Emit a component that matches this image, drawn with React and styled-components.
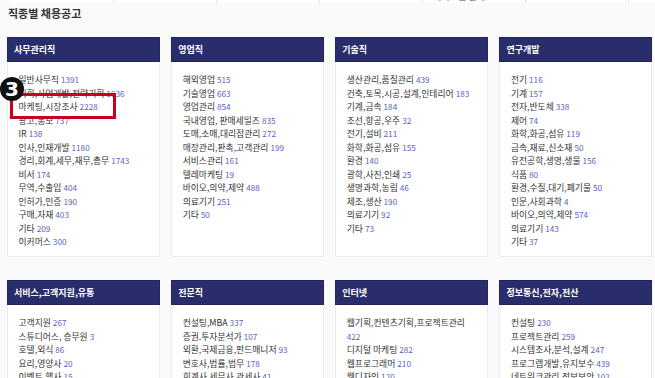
import React from 'react'
import styled, { createGlobalStyle } from 'styled-components'

const GlobalStyle = createGlobalStyle`
    html, body {
        margin: 0;
        padding: 0;
        overflow: hidden;
        background: #fafafa;
        font-family: "Noto Sans CJK KR", "Noto Sans", sans-serif;
    }
`

const Page = styled.div`
    position: relative;
    height: 378px;
    overflow: hidden;
`
const TopStrip = styled.div`
    display: flex;
    height: 3px;
    margin-left: 11px;
`
const StripCell = styled.div`
    flex: none;
    width: 103px;
    height: 3px;
    overflow: hidden;
    background: #fff;
    border-right: 1px solid #e2e2e2;
    font-size: 9px;
    line-height: 12px;
    color: #555;
    padding-left: 10px;
    box-sizing: border-box;
`
const StripText = styled.div`
    margin-top: -9px;
`
const Title = styled.h2`
    margin: 2px 0 0 8px;
    font-size: 11px;
    line-height: 16px;
    font-weight: 700;
    color: #333;
`
const Grid = styled.div`
    display: grid;
    grid-template-columns: repeat(4, 1fr);
    column-gap: 11.5px;
    row-gap: 23px;
    margin-top: 16px;
    padding: 0 3px 0 7px;
`
const Card = styled.div`
    display: flex;
    flex-direction: column;
`
const CardHeader = styled.div`
    height: 25px;
    display: flex;
    align-items: center;
    padding-left: 6px;
    background: #2a2d6b;
    border: 1px solid #23265e;
    box-sizing: border-box;
    color: #fff;
    font-size: 9px;
    font-weight: 700;
`
const CardBody = styled.ul`
    flex: 1;
    margin: 0;
    list-style: none;
    background: #fff;
    border: 1px solid #ececec;
    border-top: none;
    padding: 11px 13px 7.5px 10.5px;
`
const Item = styled.li`
    font-size: 8.8px;
    line-height: 13.5px;
    color: #333;
`
const Count = styled.span`
    font-size: 8.2px;
    color: #5a5fc6;
`
const Badge = styled.div`
    position: absolute;
    left: 0;
    top: 77px;
    width: 24px;
    height: 24px;
    border-radius: 50%;
    background: #111;
    color: #fff;
    display: flex;
    align-items: center;
    justify-content: center;
    font-family: "DejaVu Sans", sans-serif;
    font-weight: 700;
    font-size: 20px;
`
const Highlight = styled.div`
    position: absolute;
    left: 10px;
    top: 93px;
    width: 106px;
    height: 26px;
    box-sizing: border-box;
    border: 3px solid #c8001c;
`

const categories = [
    { title: '사무관리직', items: [
        ['일반사무직', 1391], ['기획,사업개발,전략기획', 1036], ['마케팅,시장조사', 2228], ['광고,홍보', 737],
        ['IR', 138], ['인사,인재개발', 1180], ['경리,회계,세무,재무,총무', 1743], ['비서', 174],
        ['무역,수출입', 404], ['인허가,인증', 190], ['구매,자재', 403], ['기타', 209], ['이커머스', 300],
    ] },
    { title: '영업직', items: [
        ['해외영업', 515], ['기술영업', 663], ['영업관리', 854], ['국내영업, 판매세일즈', 835],
        ['도매,소매,대리점관리', 272], ['매장관리,판촉,고객관리', 199], ['서비스관리', 161], ['텔레마케팅', 19],
        ['바이오,의약,제약', 488], ['의료기기', 251], ['기타', 50],
    ] },
    { title: '기술직', items: [
        ['생산관리,품질관리', 439], ['건축,토목,시공,설계,인테리어', 183], ['기계,금속', 184], ['조선,항공,우주', 32],
        ['전기,설비', 211], ['화학,화공,섬유', 155], ['환경', 140], ['광학,사진,인쇄', 25],
        ['생명과학,농림', 46], ['제조,생산', 190], ['의료기기', 92], ['기타', 73],
    ] },
    { title: '연구개발', items: [
        ['전기', 116], ['기계', 157], ['전자,반도체', 338], ['제어', 74], ['화학,화공,섬유', 119],
        ['금속,재료,신소재', 50], ['유전공학,생명,생물', 156], ['식품', 80], ['환경,수질,대기,폐기물', 50],
        ['인문,사회과학', 4], ['바이오,의약,제약', 574], ['의료기기', 143], ['기타', 37],
    ] },
    { title: '서비스,고객지원,유통', items: [
        ['고객지원', 267], ['스튜디어스, 승무원', 3], ['호텔,외식', 86], ['요리,영양사', 20],
        ['이벤트,행사', 15], ['미용,피부관리', 12],
    ] },
    { title: '전문직', items: [
        ['컨설팅,MBA', 337], ['증권.투자분석가', 107], ['외환,국제금융,펀드매니저', 93], ['변호사,법률,법무', 178],
        ['회계사,세무사,관세사', 41], ['기타', 22],
    ] },
    { title: '인터넷', items: [
        ['웹기획,컨텐츠기획,프로젝트관리', 422], ['디지털 마케팅', 282], ['웹프로그래머', 210],
        ['웹디자인', 120], ['기타', 31],
    ] },
    { title: '정보통신,전자,전산', items: [
        ['컨설팅', 230], ['프로젝트관리', 259], ['시스템조사,분석,설계', 247], ['프로그램개발,유지보수', 439],
        ['네트워크관리,정보보안', 102], ['기타', 45],
    ] },
]

const stripCells = ['', '', '', '', '서비스업 전체', '', '']

const App = () => {
    return (
        <>
            <GlobalStyle />
            <Page>
                <TopStrip>
                    {stripCells.map((text, i) => (
                        <StripCell key={i}>
                            <StripText>{text}</StripText>
                        </StripCell>
                    ))}
                </TopStrip>
                <Title>직종별 채용공고</Title>
                <Grid>
                    {categories.map((cat) => (
                        <Card key={cat.title}>
                            <CardHeader>{cat.title}</CardHeader>
                            <CardBody>
                                {cat.items.map(([name, count]) => (
                                    <Item key={name}>
                                        {name} <Count>{count}</Count>
                                    </Item>
                                ))}
                            </CardBody>
                        </Card>
                    ))}
                </Grid>
                <Highlight />
                <Badge>3</Badge>
            </Page>
        </>
    )
}

export default App
